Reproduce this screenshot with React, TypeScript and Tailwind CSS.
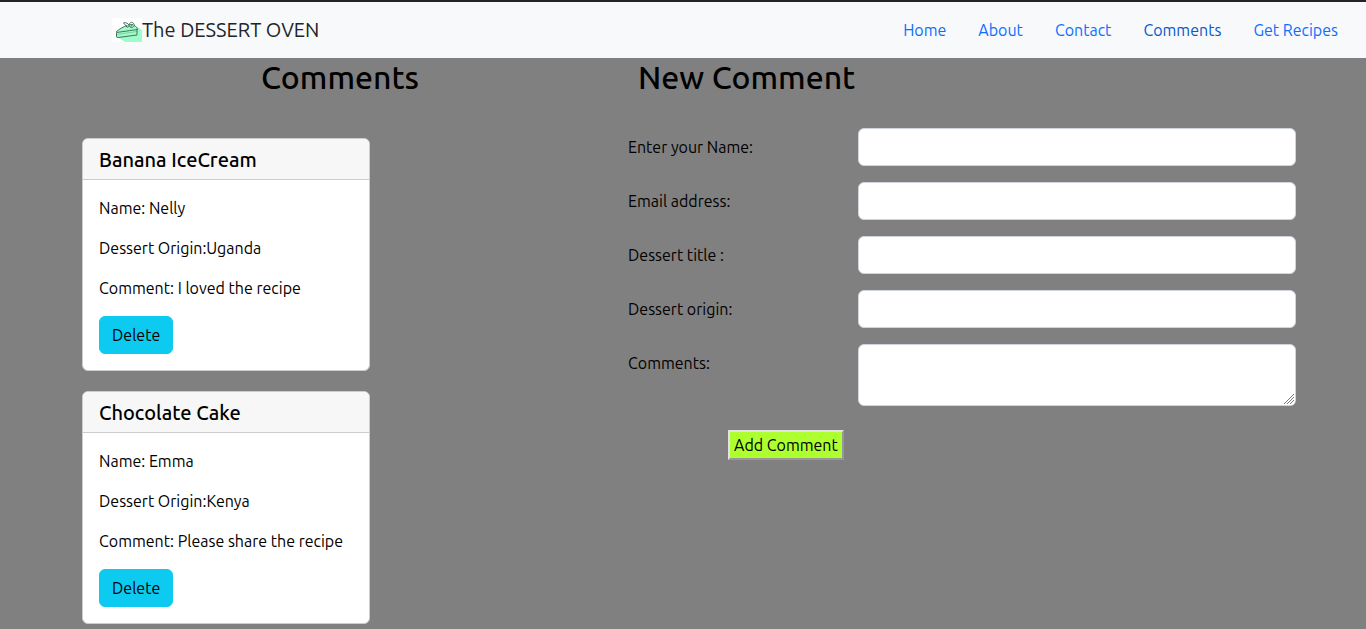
import React from 'react';

const links = [
  { label: 'Home', href: '#home' },
  { label: 'About', href: '#about' },
  { label: 'Contact', href: '#contact' },
  { label: 'Comments', href: '#comments', active: true },
  { label: 'Get Recipes', href: '#recipes' },
];

const comments = [
  { title: 'Banana IceCream', name: 'Nelly', origin: 'Uganda', text: 'I loved the recipe' },
  { title: 'Chocolate Cake', name: 'Emma', origin: 'Kenya', text: 'Please share the recipe' },
];

const fields = [
  { id: 'name', label: 'Enter your Name:', type: 'text' },
  { id: 'email', label: 'Email address:', type: 'email' },
  { id: 'title', label: 'Dessert title :', type: 'text' },
  { id: 'origin', label: 'Dessert origin:', type: 'text' },
];

function CakeLogo() {
  return (
    <svg viewBox="0 0 30 24" className="h-6 w-[30px] shrink-0" aria-hidden="true">
      <rect width="30" height="24" fill="#ffffff" />
      <path d="M6 19 25 9.500C27 9 28 10.500 30 12V24H13C11 23 8.500 21 6 19Z" fill="#9dfcc8" />
      <path
        d="M4.500 13.500C10 9.500 14 7.500 18 6.500C22 7 25 9 25.500 11.500L24.500 17L5 19.500Z"
        fill="#9dfcc8"
      />
      <g fill="none" stroke="#3c6553" strokeWidth="0.900" strokeLinejoin="round" strokeLinecap="round">
        <path d="M4.500 13.500C8 10.500 12 8.500 15 7.500M22 7.500C24 8.500 25.500 9.500 25.500 11.500L4.500 14.500V19L6 19.500L25 17V11.500" />
        <path d="M5 16.500 25 13.500" strokeWidth="0.300" />
        <path d="M14.500 8.500C13 7.500 13 5.500 11.500 5C14 4 16 5.500 17 7C17.500 4.500 20 3.500 21 5C22 5.500 23 7 21.500 8.500C20 10.500 17.500 9.500 17 7.500C16 10 14.500 9.500 14.500 8.500Z" />
        <path d="M17 7 20 6.500M19 8.500 21 6" />
      </g>
    </svg>
  );
}

function ResizeGrip() {
  return (
    <svg
      viewBox="0 0 12 12"
      className="pointer-events-none absolute right-px bottom-px size-3"
      aria-hidden="true"
    >
      <path d="M0 0H12V8Q12 12 8 12H0Z" fill="#ffffff" />
      <path d="M1 11 11 1M4 11 11 4M7 11 11 7" stroke="#777777" strokeWidth="1" fill="none" />
    </svg>
  );
}

function CommentCard({ title, name, origin, text }: (typeof comments)[number]) {
  return (
    <article className="w-72 overflow-hidden rounded-md border border-[#cccccc] bg-white">
      <h2 className="border-b border-[#cccccc] bg-[#f7f7f7] px-4 pt-2 pb-1.5 text-xl leading-[26px] font-medium">
        {title}
      </h2>
      <div className="flex flex-col items-start gap-4 p-4 leading-6">
        <p>Name: {name}</p>
        <p>Dessert Origin:{origin}</p>
        <p>Comment: {text}</p>
        <button
          type="button"
          className="h-[38px] rounded-md border border-[#0dcaf0] bg-[#0dcaf0] px-3"
        >
          Delete
        </button>
      </div>
    </article>
  );
}

export default function App() {
  return (
    <div className="min-h-screen bg-[#808080] font-['Ubuntu','Noto_Sans',sans-serif] text-base text-black">
      <nav className="flex h-[58px] items-center justify-between border-t-2 border-[#212529] bg-[#f8f9fa] pr-7 pl-28">
        <a href="#home" className="flex items-center text-xl leading-8 text-[#212529]">
          <CakeLogo />
          The DESSERT OVEN
        </a>
        <ul className="flex gap-8">
          {links.map((link) => (
            <li key={link.label}>
              <a
                href={link.href}
                className={link.active ? 'text-[#0a58ca]' : 'text-[#0d6efd]'}
                aria-current={link.active ? 'page' : undefined}
              >
                {link.label}
              </a>
            </li>
          ))}
        </ul>
      </nav>

      <main className="grid grid-cols-[540fr_668fr] gap-[18px] pr-[70px] pb-1 pl-[70px]">
        <section>
          <h1 className="text-center text-[32px] leading-[38px] font-medium">Comments</h1>
          <div className="mt-[42px] ml-3 flex flex-col gap-5">
            {comments.map((comment) => (
              <CommentCard key={comment.title} {...comment} />
            ))}
          </div>
        </section>

        <section>
          <h1 className="pl-2.5 text-[32px] leading-[38px] font-medium">New Comment</h1>
          <form className="mt-8 flex flex-col gap-4">
            {fields.map((field) => (
              <div key={field.id} className="grid grid-cols-[230px_1fr] items-center">
                <label htmlFor={field.id}>{field.label}</label>
                <input
                  id={field.id}
                  type={field.type}
                  className="h-[38px] w-full rounded-md border border-[#ced4da] bg-white px-3"
                />
              </div>
            ))}
            <div className="grid grid-cols-[230px_1fr] items-start">
              <label htmlFor="comment" className="leading-[38px]">
                Comments:
              </label>
              <div className="relative">
                <textarea
                  id="comment"
                  className="block h-[62px] w-full resize-y rounded-md border border-[#ced4da] bg-white px-3 py-1.5"
                />
                <ResizeGrip />
              </div>
            </div>
            <button
              type="button"
              className="mt-2 ml-[100px] h-[30px] self-start border-2 border-t-[#e3e3e3] border-r-[#979797] border-b-[#979797] border-l-[#e3e3e3] bg-[#adff2f] px-1 leading-6"
            >
              Add Comment
            </button>
          </form>
        </section>
      </main>
    </div>
  );
}
